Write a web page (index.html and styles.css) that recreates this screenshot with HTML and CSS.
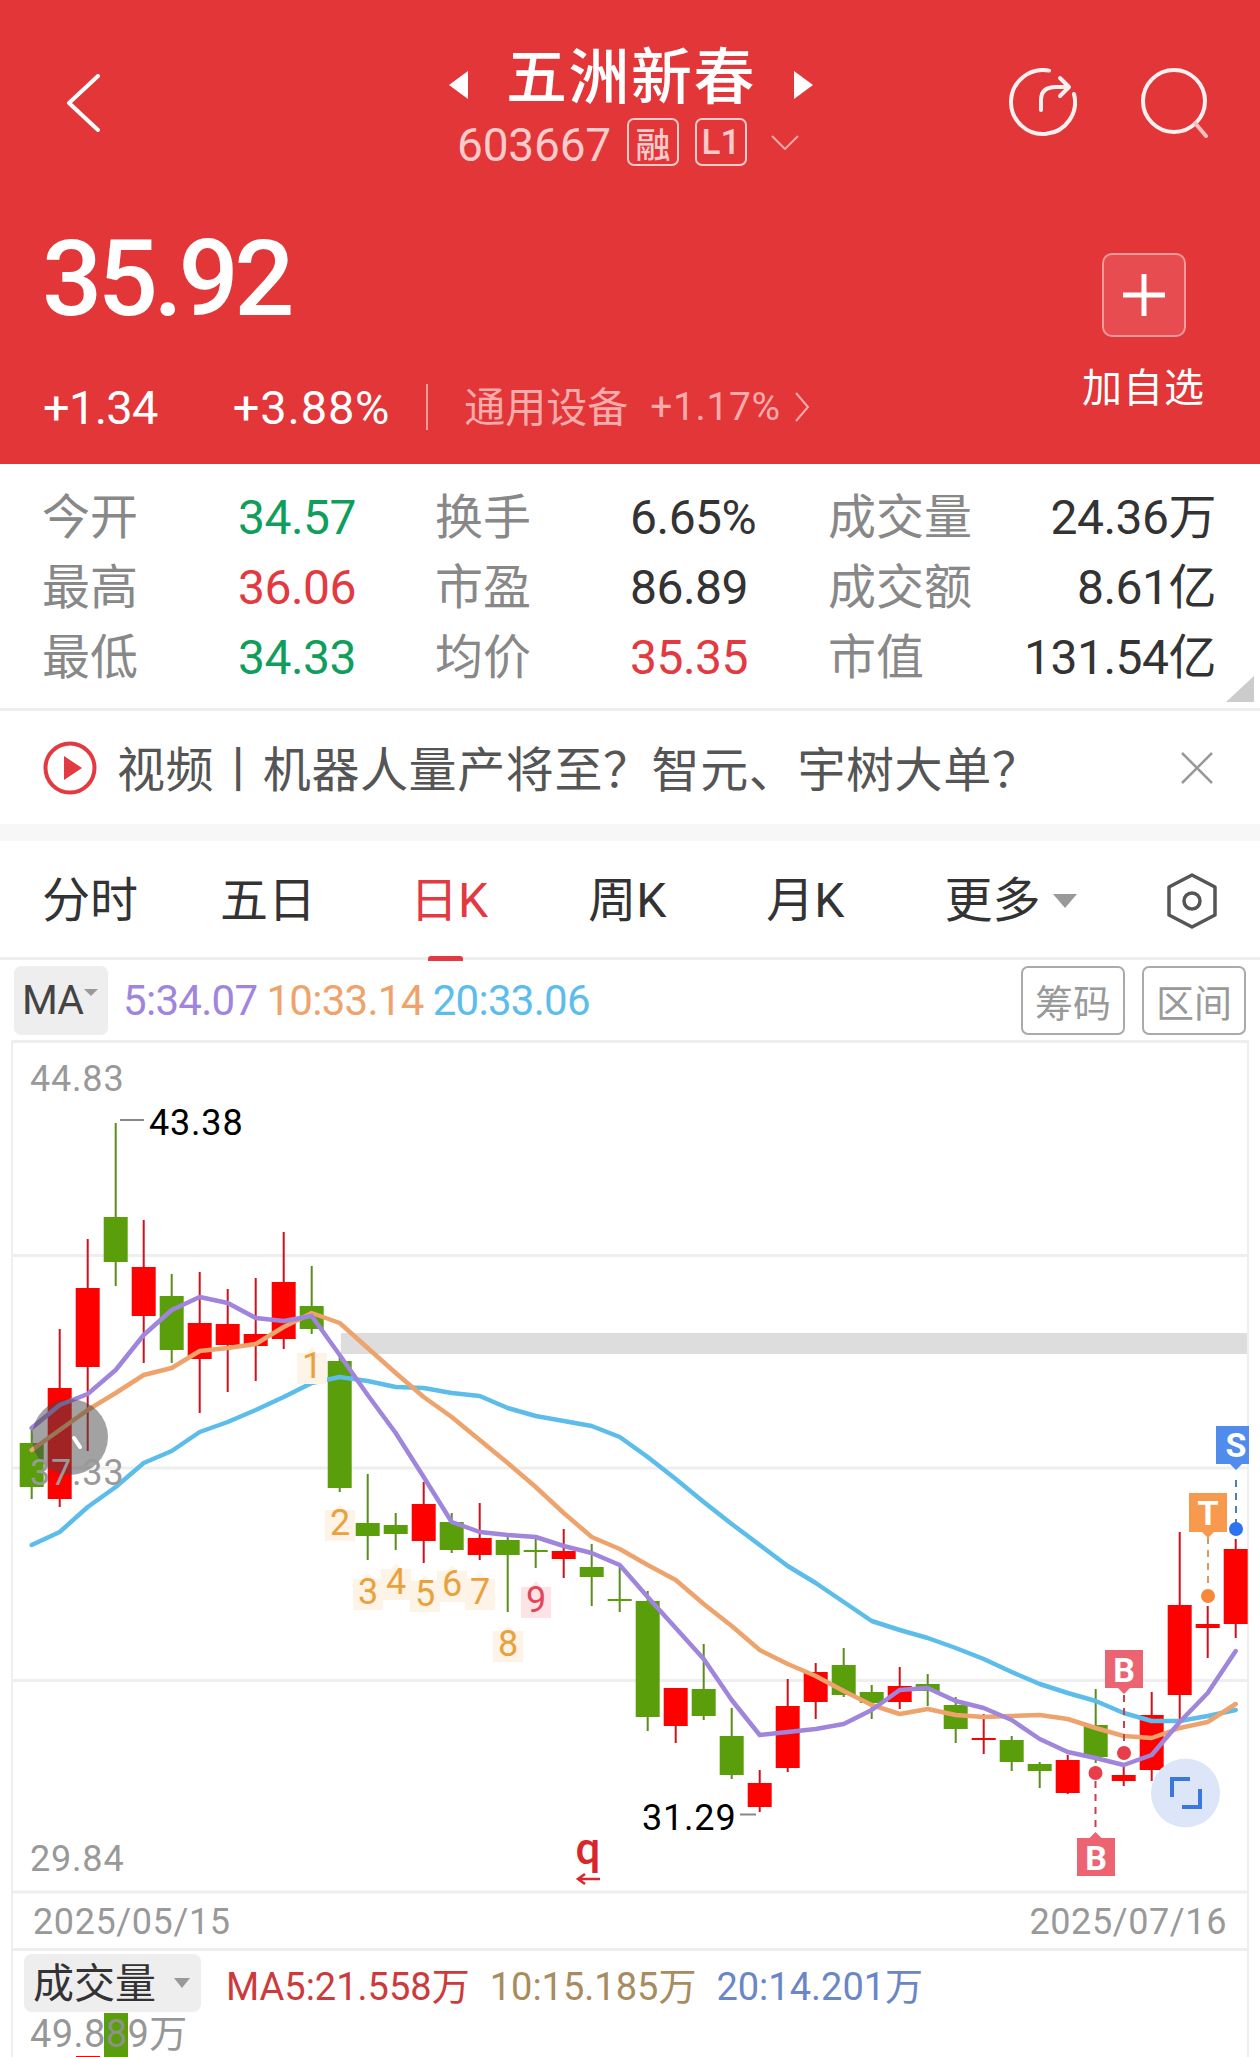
FILE: index.html

```html
<!DOCTYPE html>
<html lang="zh-CN">
<head>
  <meta charset="UTF-8">
  <title>五洲新春 603667</title>
  <link rel="stylesheet" href="styles.css">
</head>
<body>
  <header class="head">
    <div class="nav">
      <svg class="ic-back" width="34" height="58" viewBox="66 74 34 58"><path d="M98 76 69 103 98 130"/></svg>
      <div class="title-block">
        <div class="title-line">
          <svg class="nav-tri" width="20" height="28" viewBox="0 0 20 28"><path class="solid" d="M19 0V28L0 14Z"/></svg>
          <span class="name">五洲新春</span>
          <svg class="nav-tri" width="20" height="28" viewBox="0 0 20 28"><path class="solid" d="M1 0V28L20 14Z"/></svg>
        </div>
        <div class="code-line">
          <span class="code">603667</span>
          <span class="tag-box">融</span>
          <span class="tag-box">L1</span>
          <svg class="ic-down" width="28" height="15" viewBox="0 0 28 15"><path d="M1 1 14 14 27 1"/></svg>
        </div>
      </div>
      <div class="nav-right">
        <svg class="ic-line" width="68" height="70" viewBox="1009 67 68 70"><path d="M1049 70.6A32 32 0 1 0 1074 94"/><path d="M1041 110V100Q1041 87 1056 87H1068M1060 78 1069 87 1060 96"/></svg>
        <svg class="ic-line" width="68" height="72" viewBox="1140 66 68 72"><circle cx="1174" cy="100" r="31"/><path class="pale" d="M1195 122 1206 135"/></svg>
      </div>
    </div>
    <div class="quote">
      <div class="quote-left">
        <div class="price">35.92</div>
        <div class="change-row">
          <span class="chg">+1.34</span>
          <span class="chg chg-pct">+3.88%</span>
          <span class="sep"></span>
          <span class="sector">通用设备</span>
          <span class="sector-pct">+1.17%</span>
          <svg class="ic-more" width="16" height="30" viewBox="0 0 16 30"><path d="M2 1 14 15 2 29"/></svg>
        </div>
      </div>
      <div class="quote-right">
        <div class="add-btn"><svg width="44" height="44" viewBox="0 0 44 44"><path d="M22 1V43M1 22H43"/></svg></div>
        <div class="add-label">加自选</div>
      </div>
    </div>
  </header>

  <section class="stats">
    <span class="k">今开</span><span class="v down">34.57</span>
    <span class="k">换手</span><span class="v">6.65%</span>
    <span class="k">成交量</span><span class="v end">24.36万</span>
    <span class="k">最高</span><span class="v up">36.06</span>
    <span class="k">市盈</span><span class="v">86.89</span>
    <span class="k">成交额</span><span class="v end">8.61亿</span>
    <span class="k">最低</span><span class="v down">34.33</span>
    <span class="k">均价</span><span class="v up">35.35</span>
    <span class="k">市值</span><span class="v end">131.54亿</span>
    <i class="corner"></i>
  </section>

  <section class="banner">
    <svg width="54" height="54" viewBox="0 0 54 54"><circle cx="27" cy="27" r="24.5" class="play-ring"/><path d="M21 15V39L39 27Z" class="play-tri"/></svg>
    <span class="banner-text">视频丨机器人量产将至？智元、宇树大单？</span>
    <svg class="ic-close" width="34" height="34" viewBox="0 0 34 34"><path d="M2 2 32 32M32 2 2 32"/></svg>
  </section>
  <div class="band"></div>

  <nav class="tabs">
    <span class="tab tab-first">分时</span>
    <span class="tab tab-second">五日</span>
    <span class="tab active">日K</span>
    <span class="tab">周K</span>
    <span class="tab">月K</span>
    <span class="tab tab-more">更多<i class="tri"></i></span>
    <svg class="ic-gear" width="52" height="56" viewBox="0 0 52 56"><path d="M26 2 49 14V42L26 54 3 42V14Z"/><circle cx="26" cy="28" r="8"/></svg>
  </nav>

  <div class="ma-row">
    <span class="ma-box">MA<i class="tri tri-small"></i></span>
    <span class="ma-vals">
      <span class="c-ma5">5:34.07</span>
      <span class="c-ma10">10:33.14</span>
      <span class="c-ma20">20:33.06</span>
    </span>
    <span class="ma-btn">筹码</span>
    <span class="ma-btn">区间</span>
  </div>

  <div class="chart">
    <svg id="plot" class="plot" width="1234" height="850" viewBox="13 1043 1234 850">
      <path class="grid" d="M13 1255.5H1247M13 1468H1247M13 1680.5H1247M13 1892H1247"/>
      <rect class="zone" x="341" y="1333" width="906" height="21"/>
      <g id="candles"></g>
      <g id="lines"></g>
      <circle class="float-btn" cx="70" cy="1437" r="38"/>
      <path class="float-arrow" d="M74 1438 80 1447"/>
      <text class="axis" x="30" y="1091">44.83</text>
      <text class="axis" x="30" y="1485">37.33</text>
      <text class="axis" x="30" y="1871">29.84</text>
      <path class="tick" d="M120 1120H144M740 1814.5H756"/>
      <text class="hilo" x="149" y="1135">43.38</text>
      <text class="hilo" x="642" y="1830">31.29</text>
      <g id="tags"></g>
      <text class="q-mark" x="588" y="1864">q</text>
      <path class="q-arrow" d="M600 1879H578M585 1874 578 1879 585 1884"/>

      <path class="dash dash-blue" d="M1236 1480V1523"/>
      <path class="sig-s" d="M1216 1426H1249V1464H1242L1236 1470 1230 1464H1216Z"/>
      <text class="sig-text" x="1236" y="1457">S</text>
      <circle class="dot-s" cx="1236" cy="1529" r="7"/>

      <path class="dash dash-orange" d="M1208 1537V1588"/>
      <path class="sig-t" d="M1189 1493H1227V1532H1214L1208 1538 1202 1532H1189Z"/>
      <text class="sig-text" x="1208" y="1525">T</text>
      <circle class="dot-t" cx="1208" cy="1596" r="7"/>

      <path class="dash dash-red" d="M1124 1695V1745"/>
      <path class="sig-b" d="M1105 1650H1143V1688H1130L1124 1694 1118 1688H1105Z"/>
      <text class="sig-text" x="1124" y="1682">B</text>
      <circle class="dot-b" cx="1124" cy="1753" r="7"/>

      <path class="dash dash-red" d="M1095.5 1781V1830"/>
      <path class="sig-b" d="M1077 1838H1089.5L1095.5 1832 1101.5 1838H1115V1876H1077Z"/>
      <text class="sig-text" x="1096" y="1870">B</text>
      <circle class="dot-b" cx="1095.5" cy="1773" r="7"/>

      <circle class="zoom-btn" cx="1185.5" cy="1793" r="34.5"/>
      <path class="zoom-ic" d="M1190 1779H1172V1797M1182 1807H1200V1789"/>
    </svg>
    <div class="dates"><span>2025/05/15</span><span>2025/07/16</span></div>
    <div class="vol">
      <i class="vol-bar vol-green"></i>
      <i class="vol-bar vol-red"></i>
      <div class="vol-head">
        <span class="vol-box"><span class="vol-name">成交量</span><i class="tri tri-mid"></i></span>
        <span class="vol-ma c-v5">MA5:21.558万</span>
        <span class="vol-ma c-v10">10:15.185万</span>
        <span class="vol-ma c-v20">20:14.201万</span>
      </div>
      <div class="vol-max">49.889万</div>
    </div>
  </div>

  <script src="chart.js"></script>
</body>
</html>
```

FILE: styles.css

```css
* { box-sizing: border-box; }
html, body { margin: 0; padding: 0; }
body {
  width: 1260px; height: 2057px; overflow: hidden; background: #fff; color: #333;
  font-family: Roboto, "Noto Sans CJK SC", sans-serif;
}
i { display: block; font-style: normal; }

/* header */
.head { height: 464px; background: #e23638; color: #fff; }
.nav { display: grid; grid-template-columns: 1fr auto 1fr; height: 166px; padding: 0 52px 0 54px; }
.ic-back { margin: 74px 0 0 12px; fill: none; stroke: #fff; stroke-width: 4; stroke-linecap: round; stroke-linejoin: round; }
.title-block { padding-top: 40px; }
.title-line { display: flex; align-items: center; justify-content: center; gap: 37px; height: 70px; }
.nav-tri { margin-top: 20px; }
.solid { fill: #fff; }
.name { font-size: 61px; font-weight: 500; letter-spacing: 1.5px; line-height: 70px; padding-top: 5px; }
.code-line { display: flex; align-items: center; justify-content: center; height: 48px; margin-top: 8px; color: #fbcaca; padding-right: 6px; }
.code { font-size: 46px; letter-spacing: -0.2px; margin: 6px 16px 0 0; }
.tag-box {
  display: flex; align-items: center; justify-content: center; width: 52px; height: 48px;
  border: 2px solid #fbcaca; border-radius: 7px; font-size: 35px; font-weight: 500; margin-right: 16px;
}
.ic-down { fill: none; stroke: #f8a8a8; stroke-width: 2; margin: 0 0 0 8px; }
.nav-right { display: flex; justify-content: flex-end; align-items: flex-start; gap: 63px; padding-top: 67px; }
.ic-line { fill: none; stroke: #fff; stroke-width: 4; stroke-linecap: round; stroke-linejoin: round; opacity: .93; }
.ic-line .pale { stroke: #fbcaca; }

.quote { display: flex; justify-content: space-between; padding: 0 55px 0 43px; }
.price { margin: 63px 0 0 -1px; height: 97px; font-size: 106px; line-height: 100px; font-weight: 500; letter-spacing: -4.5px; }
.change-row { display: flex; align-items: center; height: 46px; margin-top: 58px; }
.chg { font-size: 47px; letter-spacing: -.7px; }
.chg-pct { margin-left: 75px; letter-spacing: .8px; }
.sep { width: 2px; height: 46px; background: #f59a9a; margin: 0 36px 0 36px; }
.sector { font-size: 41px; color: #f8abab; margin-bottom: 6px; }
.sector-pct { font-size: 39px; color: #f8abab; margin-left: 22px; letter-spacing: .6px; }
.ic-more { fill: none; stroke: #f8abab; stroke-width: 2; margin-left: 13px; }
.quote-right { display: flex; flex-direction: column; align-items: center; padding-top: 87px; }
.add-btn {
  display: flex; align-items: center; justify-content: center; width: 84px; height: 84px;
  background: #e64c50; border: 2px solid #f39a9c; border-radius: 10px;
}
.add-btn svg { fill: none; stroke: #fff; stroke-width: 5; }
.add-label { margin-top: 28px; font-size: 40px; line-height: 48px; letter-spacing: 1px; }

/* stats */
.stats {
  position: relative; display: grid; height: 247px; padding: 19px 44px 0 42px;
  grid-template-columns: 196px 197px 195px 198px 180px 1fr; grid-auto-rows: 70px; align-items: center;
  border-bottom: 3px solid #eee;
}
.k { font-size: 48px; color: #888; line-height: 70px; white-space: nowrap; }
.v { font-size: 48px; letter-spacing: -.5px; line-height: 70px; color: #333; white-space: nowrap; }
.v.end { justify-self: end; }
.up { color: #e23a40 !important; }
.down { color: #0f9e5c !important; }
.corner {
  position: absolute; right: 6px; bottom: 6px; width: 28px; height: 26px;
  background: #ccc; clip-path: polygon(100% 0, 100% 100%, 0 100%);
}

/* banner */
.banner { display: flex; align-items: center; height: 113px; padding: 0 46px 0 43px; }
.play-ring { fill: none; stroke: #e23a40; stroke-width: 4; }
.play-tri { fill: #e23a40; }
.banner-text { margin: 0 0 4px 20px; font-size: 48px; letter-spacing: .6px; color: #555; white-space: nowrap; }
.ic-close { margin-left: auto; fill: none; stroke: #999; stroke-width: 2.5; }
.band { height: 17px; background: #f7f7f7; }

/* tabs */
.tabs { display: flex; align-items: center; height: 119px; padding: 4px 42px 0; border-bottom: 3px solid #eee; }
.tab { position: relative; display: flex; align-items: center; margin-right: 100px; font-size: 48px; line-height: 60px; color: #333; }
.tab-first { margin-right: 82px; }
.tab-second { margin-right: 94px; }
.active { color: #e23a40; }
.active::after {
  content: ""; position: absolute; left: 18px; bottom: -30px; width: 35px; height: 5px;
  background: #e23a40; border-radius: 3px 3px 0 0;
}
.tri { width: 0; height: 0; margin: 0 0 0 13px; border: 12px solid transparent; border-top: 14px solid #999; border-bottom: 0; }
.tri-small { margin-left: 1px; border-width: 7px 7px 0; border-top-color: #999; margin-top: -16px; }
.tri-mid { margin-left: 18px; border-width: 10px 8px 0; border-top-color: #999; }
.tab-more { margin-right: 0; }
.ic-gear { margin-left: auto; fill: none; stroke: #555; stroke-width: 3.5; stroke-linejoin: round; }

/* ma row */
.ma-row { display: flex; align-items: center; height: 80px; padding: 0 14px; gap: 0; }
.ma-box { display: flex; align-items: center; width: 94px; height: 69px; padding-left: 8px; background: #eee; border-radius: 7px; font-size: 41px; color: #444; letter-spacing: -1px; }
.ma-vals { display: flex; gap: 9px; margin-left: 15px; font-size: 42px; letter-spacing: -.7px; }
.c-ma5 { color: #a085dc; }
.c-ma10 { color: #eea36c; }
.c-ma20 { color: #5cbdeb; }
.ma-btn {
  display: flex; align-items: center; justify-content: center; width: 104px; height: 69px; margin-left: 17px;
  border: 2px solid #aaa; border-radius: 7px; font-size: 38px; color: #999;
}
.ma-vals + .ma-btn { margin-left: auto; }

/* chart */
.chart { width: 1238px; height: 1017px; margin-left: 11px; border: 2px solid #eee; border-width: 3px 2px 0; }
.plot { display: block; overflow: visible; }
.grid { fill: none; stroke: #eee; stroke-width: 3; }
.zone { fill: #ddd; }
.wick { stroke-width: 2; }
.wick-r { stroke: #c8141c; }
.wick-g { stroke: #5a8c1c; }
.body-r { fill: #f00; }
.body-g { fill: #5a9e0c; }
.line { fill: none; stroke-width: 4.5; stroke-linejoin: round; stroke-linecap: round; }
.l5 { stroke: #a085dc; }
.l10 { stroke: #eea36c; }
.l20 { stroke: #5cbdeb; }
.float-btn { fill: rgba(70, 70, 70, .5); }
.float-arrow { stroke: #fff; stroke-width: 4; stroke-linecap: round; }
.axis { font-size: 36px; fill: #999; letter-spacing: .8px; }
.hilo { font-size: 36px; fill: #000; letter-spacing: .8px; }
.tick { fill: none; stroke: #888; stroke-width: 2; }
.tag-bg { fill: #fdf3e6; }
.tag-num { font-size: 36px; fill: #e9a23b; text-anchor: middle; }
.tag-bg.pink { fill: #fde3e6; }
.tag-num.pink { fill: #e2465a; }
.q-mark { font-size: 44px; font-weight: 500; fill: #d8262c; text-anchor: middle; }
.q-arrow { fill: none; stroke: #d8262c; stroke-width: 2.5; }
.dash { fill: none; stroke-width: 2; stroke-dasharray: 7 6; }
.dash-blue { stroke: #4a7fb8; }
.dash-orange { stroke: #d89a5e; }
.dash-red { stroke: #c8404e; }
.sig-s { fill: #4f8cee; }
.sig-t { fill: #f79a4d; }
.sig-b { fill: #ec6472; }
.sig-text { font-size: 34px; font-weight: 700; fill: #fff; text-anchor: middle; }
.dot-s { fill: #2d72ee; }
.dot-t { fill: #f5883a; }
.dot-b { fill: #e83e4c; }
.zoom-btn { fill: #dce6f8; }
.zoom-ic { fill: none; stroke: #3a78e0; stroke-width: 4; }

.dates { display: flex; justify-content: space-between; height: 58px; padding: 0 20px; border-bottom: 3px solid #eee; font-size: 36px; line-height: 58px; color: #999; letter-spacing: .6px; }
.vol { position: relative; height: 106px; padding: 3px 0 0 11px; }
.vol-bar { position: absolute; bottom: 0; }
.vol-green { left: 91px; top: 62px; width: 24px; background: #5a9e0c; }
.vol-red { left: 63px; top: 105px; width: 24px; background: #f00; }
.vol-head { display: flex; align-items: center; height: 58px; }
.vol-box {
  display: flex; align-items: center; width: 177px; height: 58px; padding-left: 9px;
  background: #eee; border-radius: 8px; color: #333;
}
.vol-name { font-size: 41px; line-height: 1; margin-top: 3px; }
.vol-ma { font-size: 38px; letter-spacing: 0; margin-left: 20px; white-space: nowrap; }
.vol-box + .vol-ma { margin-left: 25px; }
.c-v5 { color: #cc3b3b; }
.c-v10 { color: #a88b5f; }
.c-v20 { color: #6a86c8; }
.vol-max { position: relative; margin: 1px 0 0 6px; font-size: 38px; line-height: 42px; color: rgba(145, 145, 145, .95); letter-spacing: .4px; }
```

FILE: chart.js

```js
// [color, body top, body bottom, wick top, wick bottom]
const candles = [
  ['g',1443,1487,1430,1499], ['r',1388,1499,1329,1507], ['r',1288,1367,1239,1451], ['g',1217,1262,1123,1286],
  ['r',1267,1316,1220,1363], ['g',1296,1350,1274,1363], ['r',1323,1359,1272,1413], ['r',1324,1345,1289,1392],
  ['r',1334,1346,1278,1381], ['r',1282,1339,1232,1349], ['g',1306,1329,1266,1334], ['g',1361,1488,1355,1492],
  ['g',1523,1536,1474,1560], ['g',1525,1534,1513,1550], ['r',1504,1541,1482,1563], ['g',1522,1550,1513,1553],
  ['r',1538,1555,1503,1560], ['g',1540,1555,1534,1612], ['g',1550,1552,1536,1568], ['r',1551,1559,1529,1578],
  ['g',1567,1577,1544,1606], ['g',1599,1601,1565,1612], ['g',1601,1717,1591,1731], ['r',1688,1726,1688,1743],
  ['g',1689,1716,1644,1720], ['g',1736,1775,1708,1779], ['r',1783,1807,1770,1812], ['r',1706,1768,1679,1772],
  ['r',1672,1702,1663,1719], ['g',1665,1695,1648,1697], ['g',1692,1703,1685,1719], ['r',1686,1702,1667,1709],
  ['g',1684,1691,1674,1706], ['g',1705,1729,1697,1743], ['r',1738,1740,1714,1754], ['g',1740,1762,1736,1771],
  ['g',1764,1771,1762,1788], ['r',1760,1793,1755,1794], ['g',1725,1757,1689,1763], ['r',1775,1781,1767,1786],
  ['r',1715,1770,1692,1781], ['r',1605,1695,1532,1719], ['r',1624,1628,1606,1658], ['r',1549,1624,1539,1638]
];

const ma5 = [1428,1405,1394,1370,1335,1310,1297,1303,1318,1321,1316,1355,1395,1433,1477,1522,
  1532,1535,1537,1546,1553,1565,1597,1628,1659,1700,1735,1732,1729,1724,1710,1690,1688,1701,1708,1720,
  1739,1752,1758,1765,1755,1722,1693,1651];
const ma10 = [1450,1430,1410,1393,1375,1368,1351,1348,1344,1327,1313,1323,1348,1373,1397,1417,1440,1463,1487,1513,
  1537,1549,1565,1580,1604,1626,1650,1664,1676,1691,1705,1714,1709,1715,1717,1716,1715,1719,1728,1736,1738,1728,1722,1704];
const ma20 = [1545,1532,1507,1487,1463,1451,1432,1422,1410,1397,1383,1377,1381,1387,1388,1393,1396,1408,1416,1421,1426,1437,
  1457,1479,1502,1524,1545,1566,1583,1602,1621,1630,1638,1648,1659,1672,1684,1693,1701,1713,1721,1721,1716,1710];

// [label, center x, top of box, pink]
const tags = [
  ['1',312,1347], ['2',340,1504], ['3',368,1573], ['4',396,1563], ['5',425,1575],
  ['6',452,1565], ['7',480,1573], ['8',508,1625], ['9',536,1581,true]
];

const NS = 'http://www.w3.org/2000/svg';
const X0 = 31.7, STEP = 28;

function el(parent, name, attrs, text) {
  const node = document.createElementNS(NS, name);
  for (const k in attrs) node.setAttribute(k, attrs[k]);
  if (text) node.textContent = text;
  parent.appendChild(node);
}

const cg = document.getElementById('candles');
candles.forEach((c, i) => {
  const x = X0 + STEP * i;
  el(cg, 'line', {x1: x, x2: x, y1: c[3], y2: c[4], class: 'wick wick-' + c[0]});
  el(cg, 'rect', {x: x - 12, y: c[1], width: 24, height: c[2] - c[1], class: 'body-' + c[0]});
});

const lg = document.getElementById('lines');
[[ma20, 'l20'], [ma10, 'l10'], [ma5, 'l5']].forEach(([vals, cls]) => {
  const pts = vals.map((y, i) => (X0 + STEP * i) + ',' + y).join(' ');
  el(lg, 'polyline', {points: pts, class: 'line ' + cls});
});

const tg = document.getElementById('tags');
tags.forEach(([label, x, top, pink]) => {
  const extra = pink ? ' pink' : '';
  el(tg, 'path', {d: `M${x-15} ${top+6}H${x-5}L${x} ${top}L${x+5} ${top+6}H${x+15}V${top+37}H${x-15}Z`, class: 'tag-bg' + extra});
  el(tg, 'text', {x: x, y: top + 31, class: 'tag-num' + extra}, label);
});
```
